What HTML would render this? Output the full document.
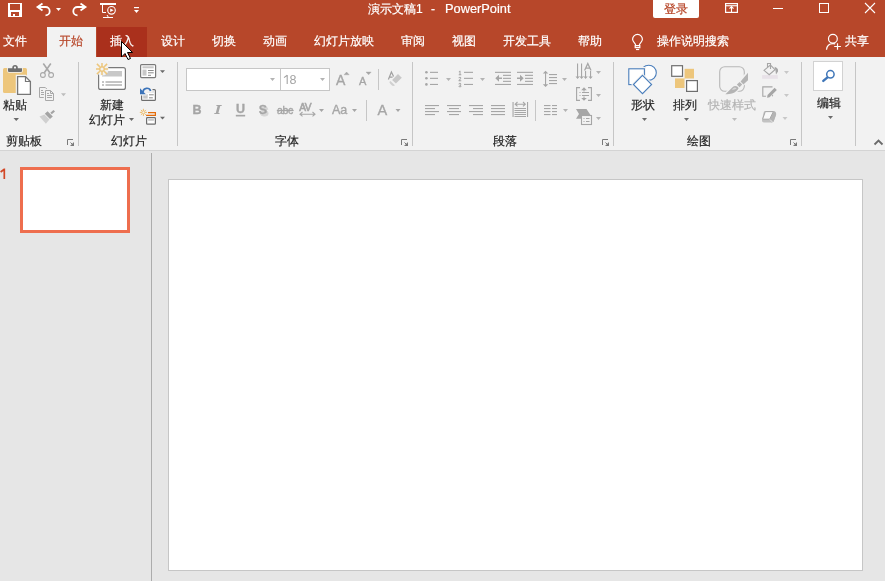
<!DOCTYPE html>
<html><head><meta charset="utf-8">
<style>
*{margin:0;padding:0;box-sizing:border-box}
html,body{width:885px;height:581px;overflow:hidden;background:#E6E6E6;font-family:"Liberation Sans",sans-serif;font-size:12px}
.a{position:absolute}
.t{will-change:transform;-webkit-text-stroke:0.2px currentColor;position:absolute;white-space:nowrap;line-height:12px;font-size:12px}
.w{color:#fff}
.k{color:#262626}
.g{color:#B4B4B4}
svg{position:absolute;left:0;top:0;will-change:transform}
</style></head><body>
<!-- title bar + tabs -->
<div class="a" style="left:0;top:0;width:885px;height:57px;background:#B7472A"></div>
<div class="a" style="left:47px;top:27px;width:49px;height:30px;background:#F2F2F2"></div>
<div class="a" style="left:97px;top:27px;width:50px;height:30px;background:#AA301C"></div>
<!-- ribbon -->
<div class="a" style="left:0;top:57px;width:885px;height:93px;background:#F2F2F2"></div>
<div class="a" style="left:0;top:150px;width:885px;height:1px;background:#D4D4D4"></div>
<!-- pane separator -->
<div class="a" style="left:151px;top:153px;width:1px;height:428px;background:#ACACAC"></div>
<!-- thumbnail -->
<div class="a" style="left:20px;top:167px;width:110px;height:66px;border:3px solid #EE6E4E;background:#fff"></div>

<!-- slide -->
<div class="a" style="left:168px;top:179px;width:695px;height:392px;background:#fff;border:1px solid #C6C6C6"></div>

<!-- title text -->
<div class="t w" style="left:368px;top:3px">演示文稿1</div>
<div class="t w" style="left:431px;top:3px">-</div>
<div class="t w" style="left:444.5px;top:2px;font-size:12.8px;line-height:13px">PowerPoint</div>
<div class="a" style="left:653px;top:0;width:46px;height:18px;background:#fff;border-radius:0 0 2px 2px"></div>
<div class="t" style="left:664px;top:3px;color:#B7472A">登录</div>

<!-- tabs -->
<div class="t w" style="left:3px;top:35px">文件</div>
<div class="t" style="left:59px;top:35px;color:#B7472A">开始</div>
<div class="t w" style="left:110px;top:35px">插入</div>
<div class="t w" style="left:161px;top:35px">设计</div>
<div class="t w" style="left:212px;top:35px">切换</div>
<div class="t w" style="left:263px;top:35px">动画</div>
<div class="t w" style="left:314px;top:35px">幻灯片放映</div>
<div class="t w" style="left:401px;top:35px">审阅</div>
<div class="t w" style="left:452px;top:35px">视图</div>
<div class="t w" style="left:503px;top:35px">开发工具</div>
<div class="t w" style="left:578px;top:35px">帮助</div>
<div class="t w" style="left:657px;top:35px">操作说明搜索</div>
<div class="t w" style="left:845px;top:35px">共享</div>

<!-- ribbon labels -->
<div class="t k" style="left:3px;top:99px">粘贴</div>
<div class="t k" style="left:6px;top:135px">剪贴板</div>
<div class="t k" style="left:100px;top:99px">新建</div>
<div class="t k" style="left:89px;top:114px">幻灯片</div>
<div class="t k" style="left:111px;top:135px">幻灯片</div>
<div class="t k" style="left:275px;top:135px">字体</div>
<div class="t k" style="left:493px;top:135px">段落</div>
<div class="t k" style="left:631px;top:99px">形状</div>
<div class="t k" style="left:673px;top:99px">排列</div>
<div class="t g" style="left:708px;top:99px">快速样式</div>
<div class="t k" style="left:687px;top:135px">绘图</div>
<div class="t k" style="left:817px;top:97px">编辑</div>

<div class="a" style="left:186px;top:68px;width:144px;height:23px;background:#fff;border:1px solid #C6C6C6"></div>
<div class="a" style="left:280px;top:68px;width:1px;height:23px;background:#C6C6C6"></div>


<div class="a" style="left:813px;top:61px;width:30px;height:30px;background:#fff;border:1px solid #D2D2D2"></div>

<svg width="885" height="581" viewBox="0 0 885 581">
<!-- QAT -->
<path fill="#fff" fill-rule="evenodd" d="M8 3H22V17H8Z M10 4V10H20V4Z M11 12V16H13V14H15V16H19V12Z"/>
<g fill="none" stroke="#fff" stroke-width="1.8">
<path d="M42.5 3.5L37.5 7L42.5 10.5"/>
<path d="M38 7H45.5A4.2 4.2 0 0 1 45.5 15.4"/>
<path d="M80.5 3.5L85.5 7L80.5 10.5"/>
<path d="M85 7H77.5A4.2 4.2 0 0 0 77.5 15.4"/>
</g>
<path fill="#fff" d="M56 8H61L58.5 11Z"/>
<rect x="100" y="3" width="16" height="2" fill="#fff"/>
<path fill="none" stroke="#fff" d="M102.5 5V12.5H106"/>
<circle cx="111.5" cy="10.3" r="3.8" fill="none" stroke="#fff" stroke-width="1.1"/>
<path fill="#fff" d="M110.2 8.6L113.6 10.3L110.2 12Z"/>
<path fill="none" stroke="#fff" d="M103 17.5H113 M107 15L108.5 17.5"/>
<rect x="134" y="7" width="5" height="1.2" fill="#fff"/>
<path fill="#fff" d="M134 10H139L136.5 13Z"/>
<!-- window controls -->
<rect x="725.6" y="3.6" width="11.8" height="8.8" fill="none" stroke="#fff" stroke-width="1.2"/>
<rect x="726" y="5.2" width="11" height="1.1" fill="#fff"/>
<path fill="none" stroke="#fff" stroke-width="1.1" d="M731.5 12V6.5 M729.5 8.6L731.5 6.6L733.5 8.6"/>
<rect x="773" y="8" width="10" height="1" fill="#fff"/>
<rect x="819.5" y="3.5" width="9" height="9" fill="none" stroke="#fff"/>
<path fill="none" stroke="#fff" stroke-width="1.1" d="M865 3L875 13M875 3L865 13"/>
<!-- lightbulb -->
<path fill="none" stroke="#fff" stroke-width="1.2" d="M635.5 45.3V44.6C635.5 43.3 632.6 41.8 632.6 39.3A4.9 4.9 0 0 1 642.4 39.3C642.4 41.8 639.5 43.3 639.5 44.6V45.3 M635.2 45.6H639.8V47.6H635.2Z"/>
<rect x="636" y="49" width="3.2" height="1.1" fill="#fff"/>
<!-- person -->
<g fill="none" stroke="#fff" stroke-width="1.2">
<circle cx="832.9" cy="38.8" r="4.4"/>
<path d="M826.5 49.8C826.8 46 829.5 43.6 833 43.6C833.8 43.6 834.5 43.7 835.2 43.9"/>
<path d="M837.5 43.3V49.8 M834.2 46.5H840.9"/>
</g>
<path fill="none" stroke="#D24726" stroke-width="1.7" d="M4.3 168.5V179 M4.3 169.2L0.6 172"/>
<!-- cursor -->
<path fill="#fff" stroke="#000" stroke-width="1" stroke-linejoin="miter" d="M121.5 41.5V57L125 53.5L128 59.5L130.5 58.5L127.5 52.5H132.5Z"/>

<!-- separators -->
<g fill="#C6C6C6">
<rect x="78" y="62" width="1" height="84"/>
<rect x="177" y="62" width="1" height="84"/>
<rect x="412" y="62" width="1" height="84"/>
<rect x="613" y="62" width="1" height="84"/>
<rect x="801" y="62" width="1" height="84"/>
<rect x="855" y="62" width="1" height="84"/>
<rect x="378" y="69" width="1" height="21"/>
<rect x="366" y="100" width="1" height="21"/>
<rect x="535" y="100" width="1" height="21"/>
</g>

<!-- paste -->
<rect x="3" y="68" width="24" height="25" rx="1.5" fill="#EDC67C"/>
<path fill="#F2F2F2" stroke="#F2F2F2" stroke-width="1.6" d="M8 68.3H12.3V67.5A2.75 2.5 0 0 1 17.8 67.5V68.3H22V71A1 1 0 0 1 21 72H9A1 1 0 0 1 8 71Z"/>
<path fill="#6E6E6E" d="M8 68.3H12.3V67.5A2.75 2.5 0 0 1 17.8 67.5V68.3H22V71A1 1 0 0 1 21 72H9A1 1 0 0 1 8 71Z"/>
<circle cx="15" cy="67.6" r="1.1" fill="#F2F2F2"/>
<path fill="#fff" stroke="#F2F2F2" stroke-width="2.5" d="M17 76H25.5L31 81.5V95H17Z"/>
<path fill="#fff" stroke="#777" stroke-width="1.3" d="M17.6 76.6H25.5L30.4 81.5V94.4H17.6Z"/>
<path fill="none" stroke="#777" stroke-width="1.2" d="M25.5 76.6V81.5H30.4"/>
<path fill="#6A6A6A" d="M13.5 118H19L16.25 121Z"/>
<!-- scissors -->
<g fill="none" stroke="#A8A8A8">
<path stroke-width="1.6" d="M43.3 63.5L49.8 72.8 M50.8 63.5L44.3 72.8"/>
<circle cx="42.9" cy="75" r="2.4" stroke-width="1.1"/>
<circle cx="51.1" cy="75" r="2.4" stroke-width="1.1"/>
</g>
<!-- copy -->
<g fill="none" stroke="#A8A8A8" stroke-width="1">
<path d="M43.8 97.5H39.5V87.5H45.3L46.8 89"/>
<path d="M45.5 90.5H50.5L53.5 93.5V100.5H45.5Z M50.5 90.5V93.5H53.5"/>
<path d="M41 90.5H43 M41 92.5H44 M41 94.5H44 M47 93.5H49 M47 95.5H52 M47 97.5H52"/>
</g>
<path fill="#BDBDBD" d="M61 93.3H66L63.5 96.3Z"/>
<!-- format painter -->
<path fill="#A4A4A4" d="M50.3 112.8L53.5 109.9L55 111.4L51.8 114.3Z"/>
<path fill="#A4A4A4" d="M44.8 113.8L47.6 111.2L52.8 116.4L50 119Z"/>
<path fill="#D0D0D0" d="M39.5 116.4L44.4 114.6L49.4 119.6L45.9 123.8Z"/>

<!-- new slide -->
<rect x="98.6" y="67.6" width="26.8" height="21.8" rx="2" fill="#fff" stroke="#7A7A7A" stroke-width="1.2"/>
<rect x="102" y="71" width="20" height="5.5" fill="#C8C8C8"/>
<path stroke="#8A8A8A" d="M102 82H104 M105.5 82H122 M102 85H104 M105.5 85H122"/>
<circle cx="102" cy="69" r="6.6" fill="#F2F2F2"/>
<g stroke="#EDC67C" stroke-width="1.5">
<path d="M102 63V66.5 M102 71.5V75 M96 69H99.5 M104.5 69H108 M96.9 63.9L99.8 66.8 M104.2 71.2L107.1 74.1 M107.1 63.9L104.2 66.8 M99.8 71.2L96.9 74.1"/>
</g>
<circle cx="102" cy="69" r="2.3" fill="#F2F2F2" stroke="#EDC67C" stroke-width="1.5"/>
<path fill="#6A6A6A" d="M129 118H134L131.5 121Z"/>
<!-- layout -->
<rect x="140.6" y="64.6" width="15" height="13" fill="#fff" stroke="#7A7A7A" rx="1" stroke-width="1.2"/>
<rect x="142.5" y="66.3" width="11.2" height="2" fill="#C8C8C8"/>
<rect x="142.5" y="69.6" width="4" height="6" fill="#C8C8C8"/>
<path stroke="#8A8A8A" d="M148 70.5H153.7 M148 72.8H153.7 M148 75.3H151"/>
<path fill="#6A6A6A" d="M160 70.2H165L162.5 73Z"/>
<!-- reset -->
<rect x="141.6" y="89.6" width="13.8" height="10.8" fill="#fff" stroke="#6E6E6E" rx="1" stroke-width="1.2"/>
<rect x="143.2" y="94.2" width="4.5" height="4.4" fill="#C8C8C8"/>
<rect x="146.3" y="91.3" width="7.6" height="1.2" fill="#CFCFCF"/>
<path stroke="#8A8A8A" d="M149 94.8H153.7 M149 97.8H152.8"/>
<path fill="#F2F2F2" d="M139 87H152.5V92.5H146.5V95.5H139Z"/>
<path fill="none" stroke="#3B73B9" stroke-width="1.7" d="M150.6 91A3.9 3.9 0 0 0 143 91.8"/>
<path fill="#3B73B9" d="M140 88.3V94.2H145.8Z"/>
<!-- section -->
<path fill="none" stroke="#E46C0A" stroke-width="1.2" d="M148 112.6H155.4V115.4H146.1"/>
<rect x="146.6" y="117.6" width="8.8" height="6.6" rx="0.8" fill="#fff" stroke="#6E6E6E" stroke-width="1.2"/>
<rect x="148.2" y="119" width="5.7" height="1.8" fill="#C8C8C8"/>
<g stroke="#EDBE6E" stroke-width="1">
<path d="M143.4 108.8V111 M143.4 113.8V116 M139.8 112.4H142 M144.8 112.4H147 M140.9 109.9L142 111 M144.8 113.8L145.9 114.9 M145.9 109.9L144.8 111 M142 113.8L140.9 114.9"/>
</g>
<circle cx="143.4" cy="112.4" r="1.5" fill="none" stroke="#EDBE6E" stroke-width="1"/>
<path fill="#6A6A6A" d="M160 116.7H165L162.5 119.5Z"/>

<!-- font group -->
<path fill="#B4B4B4" d="M270 78H275L272.5 81Z M320 78H325L322.5 81Z"/>
<g fill="#A6A6A6">
<path d="M319 109H324L321.5 112Z M352 109H357L354.5 112Z M395.5 109H400.5L398 112Z"/>
</g>

<!-- paragraph group -->
<g fill="#B4B4B4">
<path d="M446 78H451L448.5 81Z M480 78H485L482.5 81Z M562 78H567L564.5 81Z M596 71H601L598.5 74Z M596 94H601L598.5 97Z M596 117H601L598.5 120Z M563 109H568L565.5 112Z"/>
</g>

<!-- drawing -->
<circle cx="648.7" cy="72.8" r="7.6" fill="#fff" stroke="#4A7EBB" stroke-width="1.1"/>
<rect x="628.5" y="68.5" width="16" height="16" fill="#fff" stroke="#F2F2F2" stroke-width="3"/>
<rect x="628.8" y="68.8" width="15.6" height="15.8" fill="#fff" stroke="#4A7EBB" stroke-width="1.1"/>
<path fill="#fff" stroke="#F2F2F2" stroke-width="3" d="M642.5 75.4L651.6 84.5L642.5 93.6L633.4 84.5Z"/>
<path fill="#fff" stroke="#4A7EBB" stroke-width="1.1" d="M642.5 75.4L651.6 84.5L642.5 93.6L633.4 84.5Z"/>
<path fill="#6A6A6A" d="M642 118H647L644.5 121Z"/>
<rect x="675" y="68.8" width="19" height="19.2" fill="#EDC67C"/>
<rect x="671.1" y="65.1" width="12" height="11.8" fill="#fff" stroke="#F2F2F2" stroke-width="3"/>
<rect x="671.7" y="65.7" width="10.8" height="10.6" fill="#fff" stroke="#6E6E6E" stroke-width="1.2"/>
<rect x="686" y="80" width="12" height="12" fill="#fff" stroke="#F2F2F2" stroke-width="3"/>
<rect x="686.6" y="80.6" width="10.8" height="10.8" fill="#fff" stroke="#6E6E6E" stroke-width="1.2"/>
<path fill="#6A6A6A" d="M684 118H689L686.5 121Z"/>
<!-- quick styles -->
<rect x="719.7" y="66.7" width="24.6" height="24.6" rx="5" fill="none" stroke="#B8B8B8" stroke-width="1.1"/>
<path fill="#F2F2F2" stroke="#F2F2F2" stroke-width="2.5" d="M748 72.7V80.3L743.2 84.3L741.3 82.4L739.8 87.4C737 92 731 94.3 725.4 94.3L731 88.5L735.8 84.2L737.3 83.3Z"/>
<path fill="#B4B4B4" d="M748 72.7V80.3L743.4 84.4L740.6 81.4Z"/>
<path fill="#B4B4B4" d="M736.9 84.6L739.6 81.9L742.2 84.5L739.5 87.2Z"/>
<path fill="#B4B4B4" d="M738.6 88.2C737.5 85.8 734.5 85.3 732.5 87.3L725.4 94.3C730 94.3 736 93.2 738.6 88.2Z"/>
<path fill="#D8D8D8" d="M736.6 88.4C735.8 87.3 734.4 87 733.4 88L731.8 89.7C733.5 89.5 735.5 89.3 736.6 88.4Z"/>
<path fill="#BDBDBD" d="M732 118H737L734.5 121Z"/>
<!-- fill/outline/effects -->
<rect x="762.1" y="75.1" width="15.7" height="3.7" fill="#E8E2E8"/>
<path fill="none" stroke="#A6A6A6" stroke-width="1.1" d="M764 70.3L770.4 65L775 69.7L769.2 74.7Z"/>
<path fill="none" stroke="#A6A6A6" stroke-width="1.1" d="M767.5 67V63.5H770.5V69"/>
<path fill="#A6A6A6" d="M774.5 66.8C777 67.5 778.5 69 778 71.5L776 74.5L775.4 70Z"/>
<path fill="#C8C8C8" d="M784 71H789L786.5 74Z M784 94H789L786.5 97Z M782.5 117H787.5L785 120Z"/>
<path fill="none" stroke="#A6A6A6" stroke-width="1.1" d="M772.5 86.9H762.8V96.3H767"/>
<path fill="none" stroke="#A6A6A6" stroke-width="1.1" d="M772.5 92V96.3"/>
<path fill="#F2F2F2" d="M776.5 86L779 88.5L770 97.5L765.5 98.5L766.5 94Z"/>
<path fill="#A6A6A6" d="M774.6 87.8L776.8 90L769.6 97.2L767.1 97.7L767.5 95Z"/>
<path fill="#C2C2C2" d="M765 111H773.6C775.5 111 776.6 113 776 115L773.8 121C773.4 122 772.6 122.4 771.6 122.4H764C762.6 122.4 761.7 121.4 762 120L763.5 113C763.8 111.8 764.2 111 765 111Z"/>
<path fill="#B4B4B4" d="M773.8 111.5C775.8 112 776.6 113.5 776 115L773.8 121C773.4 122 772.6 122.4 771.6 122.4L769.8 119.5Z"/>
<path fill="#F8F8F8" stroke="#A8A8A8" stroke-width="1" d="M765.3 111.6H773.4L769.7 119.2H762.6Z"/>
<path stroke="#F2F2F2" stroke-width="0.9" d="M770 119.5L772.6 122.2"/>
<!-- editing -->
<circle cx="830.4" cy="74.3" r="3.7" fill="none" stroke="#3F76B8" stroke-width="1.5"/>
<path stroke="#3F76B8" stroke-width="2.4" stroke-linecap="round" d="M827.2 77.6L823.3 80.9"/>
<path fill="#6A6A6A" d="M828 116H833L830.5 119Z"/>
<path fill="none" stroke="#6A6A6A" stroke-width="1.8" d="M874.5 144.5L878.5 140.5L882.5 144.5"/>
<!-- dialog launchers -->
<path fill="none" stroke="#7A7A7A" stroke-width="1" d="M67.5 145V139.5H73"/>
<path fill="none" stroke="#7A7A7A" stroke-width="1" d="M70.5 142.5L73 145"/>
<path fill="#7A7A7A" d="M74 142V146H70Z"/>
<path fill="none" stroke="#7A7A7A" stroke-width="1" d="M401.5 145V139.5H407"/>
<path fill="none" stroke="#7A7A7A" stroke-width="1" d="M404.5 142.5L407 145"/>
<path fill="#7A7A7A" d="M408 142V146H404Z"/>
<path fill="none" stroke="#7A7A7A" stroke-width="1" d="M602.5 145V139.5H608"/>
<path fill="none" stroke="#7A7A7A" stroke-width="1" d="M605.5 142.5L608 145"/>
<path fill="#7A7A7A" d="M609 142V146H605Z"/>
<path fill="none" stroke="#7A7A7A" stroke-width="1" d="M790.5 145V139.5H796"/>
<path fill="none" stroke="#7A7A7A" stroke-width="1" d="M793.5 142.5L796 145"/>
<path fill="#7A7A7A" d="M797 142V146H793Z"/>


<!-- font group icons -->
<path fill="none" stroke="#A4A4A4" stroke-width="1.1" d="M287.2 75V84 M287.2 75.3L284 77.6"/>
<text x="289.5" y="84" font-size="12.5" fill="#A4A4A4" font-family="Liberation Sans, sans-serif">8</text>
<g fill="#A6A6A6" stroke="#A6A6A6" stroke-width="0.35" font-family="Liberation Sans, sans-serif">
<text x="336" y="85" font-size="14">A</text>
<path d="M344 74.8H349.2L346.6 72Z"/>
<text x="359" y="85" font-size="11">A</text>
<path d="M366 72H371.2L368.6 74.8Z"/>

<text x="192.4" y="114" font-size="12.5" font-weight="bold">B</text>
<text x="377.5" y="114.6" font-size="14.5">A</text>
<text x="332" y="114" font-size="12.5">Aa</text>
<text x="299.2" y="110.5" font-size="10.2" letter-spacing="-0.5" stroke-width="0.6">AV</text>
<text x="277" y="114" font-size="10.5" letter-spacing="-0.3">abc</text>
<rect x="277" y="110" width="16.5" height="1"/>
<text x="236" y="113" font-size="12.5" font-weight="bold">U</text>
<rect x="236" y="115" width="9" height="1.2"/>
</g>
<text x="260.2" y="115.8" font-size="12.5" font-weight="bold" fill="#D6D6D6" stroke="#D6D6D6" stroke-width="0.8" font-family="Liberation Sans, sans-serif">S</text>
<text x="258.8" y="114" font-size="12.5" font-weight="bold" fill="#A6A6A6" stroke="#A6A6A6" stroke-width="0.3" font-family="Liberation Sans, sans-serif">S</text>
<path fill="#A6A6A6" d="M216.5 105H221.8L221.6 106H220.2L218.4 113H219.6L219.4 114H214.2L214.4 113H215.8L217.6 106H216.3Z"/>
<path fill="none" stroke="#A6A6A6" stroke-width="1.1" d="M300 114.2H315 M302.5 112L300 114.2L302.5 116.4 M312.5 112L315 114.2L312.5 116.4"/>
<path fill="none" stroke="#A0A0A0" stroke-width="1.2" d="M388.4 79.4L391.4 72L393.6 76.5 M389.6 77.1H392.6"/>
<path fill="#C8C8C8" d="M392.1 79.9L398 74.1L401.8 77.7L395.9 83.6Z"/>
<path fill="#D0D0D0" d="M389.3 82L390.4 81L395 85.3L393.6 86C392 86 390.2 84 389.3 82Z"/>

<!-- paragraph icons -->
<g fill="#A6A6A6">
<circle cx="426.4" cy="72.3" r="1.3"/><circle cx="426.4" cy="78.3" r="1.3"/><circle cx="426.4" cy="84.4" r="1.3"/>
<rect x="430" y="71.8" width="8" height="1.1"/><rect x="430" y="77.8" width="8" height="1.1"/><rect x="430" y="83.9" width="8" height="1.1"/>
<rect x="464" y="71.8" width="9" height="1.1"/><rect x="464" y="77.8" width="9" height="1.1"/><rect x="464" y="83.9" width="9" height="1.1"/>
<text x="458.5" y="75" font-size="5.2" stroke="#A6A6A6" stroke-width="0.3" font-family="Liberation Sans, sans-serif">1</text>
<text x="458.5" y="81" font-size="5.2" stroke="#A6A6A6" stroke-width="0.3" font-family="Liberation Sans, sans-serif">2</text>
<text x="458.5" y="87" font-size="5.2" stroke="#A6A6A6" stroke-width="0.3" font-family="Liberation Sans, sans-serif">3</text>
<rect x="495" y="71.8" width="16" height="1.1"/><rect x="503" y="74.8" width="8" height="1.1"/><rect x="503" y="77.8" width="8" height="1.1"/><rect x="503" y="80.8" width="8" height="1.1"/><rect x="495" y="83.9" width="16" height="1.1"/>
<path d="M495.3 78.3L499 74.8V77.6H502V79H499V81.8Z"/>
<rect x="517" y="71.8" width="16" height="1.1"/><rect x="525" y="74.8" width="8" height="1.1"/><rect x="525" y="77.8" width="8" height="1.1"/><rect x="525" y="80.8" width="8" height="1.1"/><rect x="517" y="83.9" width="16" height="1.1"/>
<path d="M523.7 78.3L520 74.8V77.6H517V79H520V81.8Z"/>
<!-- line spacing -->
<rect x="545" y="72" width="1.1" height="14"/>
<path d="M545.55 70.8L548.3 73.6H542.8Z M545.55 87L548.3 84.2H542.8Z"/>
<rect x="549" y="74" width="8" height="1.1"/><rect x="549" y="77" width="8" height="1.1"/><rect x="549" y="80" width="8" height="1.1"/><rect x="549" y="83" width="8" height="1.1"/>
<!-- text direction -->
<rect x="577" y="63.5" width="1.1" height="14"/><rect x="581" y="63.5" width="1.1" height="14"/>
<rect x="585" y="71" width="1.1" height="6.5"/><rect x="590" y="71" width="1.1" height="6.5"/>
<path d="M575.5 76.5H579.7L577.6 79Z M579.5 76.5H583.7L581.6 79Z M583.5 76.5H587.7L585.6 79Z M588.5 76.5H592.7L590.6 79Z"/>

<!-- align text -->
<path fill="none" stroke="#A6A6A6" stroke-width="1.1" d="M580 87.6H576.6V100.4H580 M588 87.6H591.4V100.4H588 M584 89V91.5 M584 96.5V99.5"/>
<path d="M584 87.3L586.8 90.2H581.2Z M584 100.8L586.8 97.9H581.2Z"/>
<rect x="579.5" y="92" width="1" height="1"/><rect x="582" y="92" width="7" height="1"/><rect x="579.5" y="95" width="1" height="1"/><rect x="582" y="95" width="7" height="1"/>
<!-- align row -->
<rect x="425" y="105" width="14" height="1.1"/><rect x="425" y="108" width="10" height="1.1"/><rect x="425" y="111" width="14" height="1.1"/><rect x="425" y="114" width="10" height="1.1"/>
<rect x="447" y="105" width="14" height="1.1"/><rect x="449" y="108" width="10" height="1.1"/><rect x="447" y="111" width="14" height="1.1"/><rect x="449" y="114" width="10" height="1.1"/>
<rect x="469" y="105" width="14" height="1.1"/><rect x="473" y="108" width="10" height="1.1"/><rect x="469" y="111" width="14" height="1.1"/><rect x="473" y="114" width="10" height="1.1"/>
<rect x="491" y="105" width="14" height="1.1"/><rect x="491" y="108" width="14" height="1.1"/><rect x="491" y="111" width="14" height="1.1"/><rect x="491" y="114" width="14" height="1.1"/>
<rect x="512.5" y="102" width="1.1" height="15"/><rect x="527" y="102" width="1.1" height="15"/>
<rect x="514.5" y="108" width="11.5" height="1"/><rect x="514.5" y="110" width="11.5" height="1"/><rect x="514.5" y="112" width="11.5" height="1"/><rect x="514.5" y="114" width="11.5" height="1"/><rect x="514.5" y="116" width="11.5" height="1"/>
<!-- columns -->
<rect x="544" y="105" width="6.5" height="1.1"/><rect x="544" y="108" width="6.5" height="1.1"/><rect x="544" y="111" width="6.5" height="1.1"/><rect x="544" y="114" width="6.5" height="1.1"/>
<rect x="552" y="105" width="5" height="1.1"/><rect x="552" y="108" width="5" height="1.1"/><rect x="552" y="111" width="5" height="1.1"/><rect x="552" y="114" width="5" height="1.1"/>
<path fill="none" stroke="#A6A6A6" stroke-width="1.3" d="M584.6 70.6L587.8 63.6L591 70.6 M585.8 68.2H589.8"/>
<!-- smartart -->
<path d="M576 109H586.5L590.5 115H581V118.8H576L579 114Z"/>
</g>
<path fill="none" stroke="#A6A6A6" stroke-width="1.1" d="M515.5 104.2H525 M517.5 102L515.2 104.2L517.5 106.4 M523 102L525.3 104.2L523 106.4"/>
<rect x="581.5" y="115.5" width="10" height="9" fill="#F2F2F2" stroke="#A6A6A6" stroke-width="1.1"/>
<path stroke="#A6A6A6" d="M583.5 118.5H584.5 M586 118.5H589.5 M583.5 121.5H584.5 M586 121.5H589.5"/>
</svg>
</body></html>
